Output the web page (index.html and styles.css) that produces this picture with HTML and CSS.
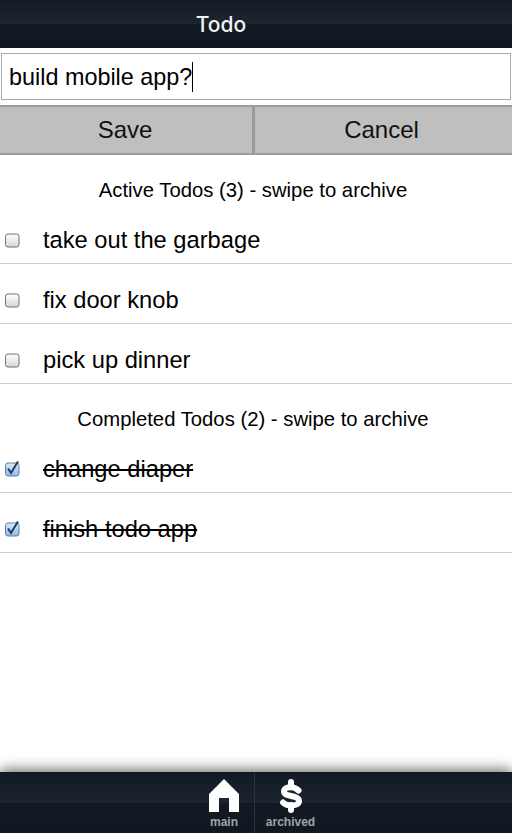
FILE: index.html
```html
<!DOCTYPE html>
<html lang="en">
<head>
<meta charset="utf-8">
<title>Todo</title>
<link rel="stylesheet" href="styles.css">
</head>
<body>
<div class="app">
  <header class="topbar"><h1 class="title">Todo</h1></header>
  <form class="entry">
    <div class="field"><span class="field-text">build mobile app?</span><span class="caret"></span></div>
    <div class="actions">
      <button type="button" class="btn btn-save">Save</button>
      <button type="button" class="btn btn-cancel">Cancel</button>
    </div>
  </form>
  <main class="lists">
    <h2 class="heading">Active Todos (3) - swipe to archive</h2>
    <ul class="list">
      <li class="row"><svg class="box" viewBox="0 0 15 15"><use href="#box-off"/></svg><span>take out the garbage</span></li>
      <li class="row"><svg class="box" viewBox="0 0 15 15"><use href="#box-off"/></svg><span>fix door knob</span></li>
      <li class="row"><svg class="box" viewBox="0 0 15 15"><use href="#box-off"/></svg><span>pick up dinner</span></li>
    </ul>
    <h2 class="heading">Completed Todos (2) - swipe to archive</h2>
    <ul class="list">
      <li class="row done"><svg class="box" viewBox="0 0 15 15"><use href="#box-on"/></svg><span>change diaper</span></li>
      <li class="row done"><svg class="box" viewBox="0 0 15 15"><use href="#box-on"/></svg><span>finish todo app</span></li>
    </ul>
  </main>
  <footer class="tabbar">
    <a class="tab tab-main">
      <svg class="tab-icon" width="30" height="34" viewBox="0 0 30 34"><path fill="#fff" d="M15 0 L30 15 V33 H20 V19 H10 V33 H0 V15 Z"/></svg>
      <span class="tab-label">main</span>
    </a>
    <a class="tab tab-archived">
      <svg class="tab-icon" width="24" height="34" viewBox="0 0 24 34"><path fill="none" stroke="#fff" stroke-width="6" stroke-linecap="round" stroke-linejoin="round" d="M19.5 11.5 C17 9.2 14.8 8.3 12 8.3 C7.8 8.3 5 9.8 5 12.5 C5 18.5 20 15.5 20 22 C20 25 16.5 26.5 12 26.5 C8.8 26.5 6 25.5 4 23.5"/><path fill="none" stroke="#fff" stroke-width="6" stroke-linecap="round" d="M12 3 V8 M12 26 V31"/></svg>
      <span class="tab-label">archived</span>
    </a>
  </footer>
</div>
<svg class="defs" width="0" height="0">
  <defs>
    <linearGradient id="off" x1="0" y1="0" x2="0" y2="1"><stop offset="0" stop-color="#ffffff"/><stop offset="0.5" stop-color="#ececec"/><stop offset="1" stop-color="#d4d4d4"/></linearGradient>
    <linearGradient id="on" x1="0" y1="0" x2="0" y2="1"><stop offset="0" stop-color="#dbe9f8"/><stop offset="0.5" stop-color="#b3d2f0"/><stop offset="1" stop-color="#8bbae8"/></linearGradient>
    <g id="box-off"><rect x="0.5" y="1" width="13.5" height="13" rx="2.5" fill="url(#off)" stroke="#6f6f6f"/></g>
    <g id="box-on"><rect x="0.5" y="1" width="13.5" height="13" rx="2.5" fill="url(#on)" stroke="#5f7f9f"/><path d="M3 6.5 L6 11 L13 -0.5" fill="none" stroke="#1d3a5c" stroke-width="2"/></g>
  </defs>
</svg>
</body>
</html>
```
FILE: styles.css
```css
* { box-sizing: border-box; }
html, body { margin: 0; padding: 0; height: 100%; }
body { font-family: "Liberation Sans", Arial, sans-serif; color: #000; background: #fff; }
.app { height: 833px; display: flex; flex-direction: column; overflow: hidden; }

.topbar {
  height: 48px; flex: none;
  display: flex; align-items: center; justify-content: center;
  padding-right: 70px; padding-top: 1px;
  background: linear-gradient(to bottom, #141b27 0, #1c2531 50%, #121a24 50%, #0f1720 100%);
}
.title { margin: 0; font: 500 21px/47px "Inter", "Roboto", sans-serif; color: #f2f2f2; }

.entry { flex: none; padding-top: 5px; }
.field {
  height: 47px; margin: 0 1px;
  padding-left: 7px;
  border: 1px solid #a9a9a9;
  font-size: 23.4px;
  display: flex; align-items: center;
  background: #fff;
}
.field-text { padding-top: 2px; }
.caret { display: inline-block; width: 1px; height: 30px; background: #000; }
.actions { display: flex; margin-top: 5px; height: 50px; }
.btn {
  font: 24px "Liberation Sans", Arial, sans-serif; color: #111;
  background: #bfbfbf; border: 0; padding: 0;
  border-top: 2px solid #9c9c9c; border-bottom: 2px solid #9c9c9c;
}
.btn-save { width: 253px; border-right: 1px solid #9c9c9c; padding-right: 2px; }
.btn-cancel { flex: 1; border-left: 2px solid #9c9c9c; padding-right: 4px; }

.lists { flex: 1; }
.heading { margin: 0; height: 49px; padding-right: 6px; font-size: 20.3px; font-weight: 400; text-align: center; line-height: 71px; }
.list { list-style: none; margin: 0; padding: 0; }
.row {
  height: 60px; display: flex; align-items: center;
  border-bottom: 1px solid #cccccc;
  font-size: 23.7px;
  padding: 14px 0 0 5px;
  gap: 23px;
}
.box { width: 15px; height: 15px; flex: none; overflow: visible; }
.done span { text-decoration: line-through; }

.tabbar {
  height: 61px; flex: none; position: relative;
  display: flex; justify-content: center; padding-left: 8px;
  background: linear-gradient(to bottom, #111924 0, #1b2430 50%, #121a24 50%, #0f1720 100%);
  box-shadow: 0 -3px 12px rgba(0,0,0,0.55);
}
.tab { display: flex; flex-direction: column; align-items: center; padding-top: 7px; color: #a3a3a3; }
.tab-main { width: 61px; border-right: 1px solid #2a3440; }
.tab-archived { width: 71px; }
.tab-icon { display: block; flex: none; }
.tab-label { font-size: 12px; font-weight: 700; line-height: 14px; margin-top: 2px; }
.defs { position: absolute; }
```
